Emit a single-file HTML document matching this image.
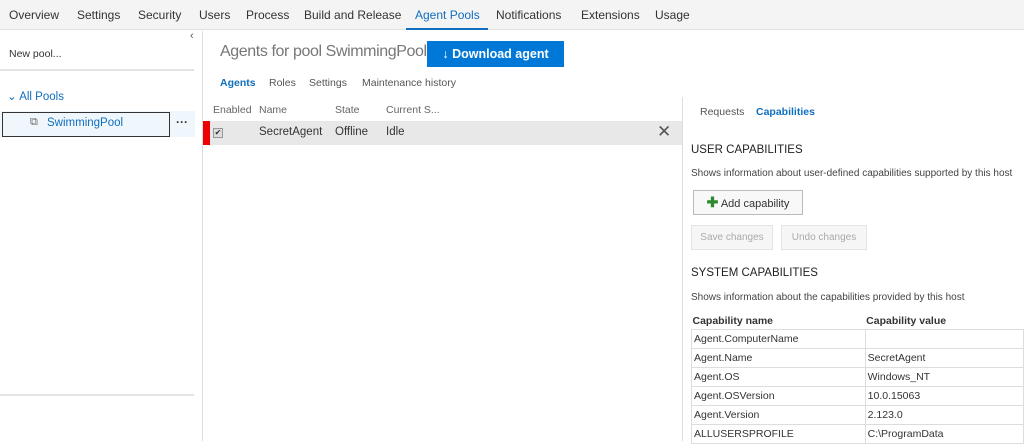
<!DOCTYPE html>
<html><head><meta charset="utf-8"><style>
*{margin:0;padding:0;box-sizing:border-box}
body{width:1024px;height:441px;overflow:hidden;background:#fff;font-family:"Liberation Sans",sans-serif;color:#333;position:relative;font-size:12px}
.a{position:absolute;white-space:nowrap}
.top{left:0;top:0;width:1024px;height:30px;background:#f4f4f4;border-bottom:1px solid #e0e0e0}
.nav{top:8px;font-size:12px;color:#333}
.btn{position:absolute;border:1px solid #ccc;background:#f8f8f8;font-size:11px;text-align:center}
table{border-collapse:collapse;position:absolute;left:691px;top:314px;font-size:10.5px}
td{border:1px solid #ddd;height:19px;padding:0 2px;color:#333}
th{text-align:left;font-weight:bold;padding:0 1px;height:15px;border-bottom:1px solid #ddd}
</style></head><body>
<div class="a top"></div>
<div class="a nav" style="left:9px">Overview</div>
<div class="a nav" style="left:77px">Settings</div>
<div class="a nav" style="left:138px">Security</div>
<div class="a nav" style="left:199px">Users</div>
<div class="a nav" style="left:246px">Process</div>
<div class="a nav" style="left:304px">Build and Release</div>
<div class="a nav" style="left:415px;color:#106ebe">Agent Pools</div>
<div class="a" style="left:406px;top:28px;width:82px;height:2px;background:#106ebe"></div>
<div class="a nav" style="left:496px">Notifications</div>
<div class="a nav" style="left:581px">Extensions</div>
<div class="a nav" style="left:655px">Usage</div>

<div class="a" style="left:202px;top:31px;width:1px;height:410px;background:#ddd"></div>
<div class="a" style="left:190px;top:30px;font-size:11px;color:#555">‹</div>
<div class="a" style="left:9px;top:48px;font-size:10.5px">New pool...</div>
<div class="a" style="left:0;top:69px;width:194px;height:2px;background:#e4e4e4"></div>
<div class="a" style="left:7px;top:89px;font-size:11.5px;color:#106ebe">⌄ All Pools</div>
<div class="a" style="left:0;top:111px;width:195px;height:26px;background:#eff6fc"></div>
<div class="a" style="left:2px;top:112px;width:168px;height:25px;border:1px solid #333;background:#eff6fc"></div>
<div class="a" style="left:30px;top:116px;font-size:11px;color:#666">⧉</div>
<div class="a" style="left:47px;top:117px;font-size:11.5px;color:#106ebe">SwimmingPool</div>
<div class="a" style="left:176px;top:115px;font-size:12px;font-weight:bold">···</div>
<div class="a" style="left:0;top:394px;width:194px;height:2px;background:#e4e4e4"></div>

<div class="a" style="left:220px;top:43px;font-size:16px;letter-spacing:-0.4px;color:#777">Agents for pool SwimmingPool</div>
<div class="a" style="left:427px;top:41px;width:137px;height:26px;background:#0078d7;color:#fff;font-size:12.5px;font-weight:bold;text-align:center;line-height:26px">↓ Download agent</div>
<div class="a" style="left:220px;top:77px;font-size:10.5px;color:#106ebe;font-weight:bold">Agents</div>
<div class="a" style="left:269px;top:77px;font-size:10.5px;color:#555">Roles</div>
<div class="a" style="left:309px;top:77px;font-size:10.5px;color:#555">Settings</div>
<div class="a" style="left:362px;top:77px;font-size:10.5px;color:#555">Maintenance history</div>
<div class="a" style="left:213px;top:104px;font-size:10.5px;color:#666">Enabled</div>
<div class="a" style="left:259px;top:104px;font-size:10.5px;color:#666">Name</div>
<div class="a" style="left:335px;top:104px;font-size:10.5px;color:#666">State</div>
<div class="a" style="left:386px;top:104px;font-size:10.5px;color:#666">Current S...</div>
<div class="a" style="left:203px;top:121px;width:480px;height:24px;background:#e8e8e8"></div>
<div class="a" style="left:203px;top:121px;width:7px;height:24px;background:#e00"></div>
<div class="a" style="left:213px;top:128px;width:10px;height:10px;border:1px solid #999;background:#ddd;font-size:8px;line-height:8px;text-align:center">✔</div>
<div class="a" style="left:259px;top:126px;font-size:11.5px">SecretAgent</div>
<div class="a" style="left:335px;top:126px;font-size:11.5px">Offline</div>
<div class="a" style="left:386px;top:126px;font-size:11.5px">Idle</div>
<div class="a" style="left:657px;top:122px;font-size:17px;color:#555">✕</div>
<div class="a" style="left:682px;top:97px;width:1px;height:344px;background:#ddd"></div>

<div class="a" style="left:700px;top:106px;font-size:10.5px;color:#555">Requests</div>
<div class="a" style="left:756px;top:106px;font-size:10.5px;color:#106ebe;font-weight:bold">Capabilities</div>
<div class="a" style="left:691px;top:144px;font-size:11.5px;color:#222">USER CAPABILITIES</div>
<div class="a" style="left:691px;top:168px;font-size:10px;color:#444">Shows information about user-defined capabilities supported by this host</div>
<div class="btn" style="left:693px;top:190px;width:110px;height:25px;line-height:23px;border-color:#bbb;color:#333"><span style="color:#2b8a2b;font-weight:bold;font-size:14px">✚</span> Add capability</div>
<div class="btn" style="left:691px;top:225px;width:82px;height:25px;line-height:23px;color:#aaa;border-color:#e4e4e4;background:#f6f6f6;font-size:10px">Save changes</div>
<div class="btn" style="left:781px;top:225px;width:86px;height:25px;line-height:23px;color:#aaa;border-color:#e4e4e4;background:#f6f6f6;font-size:10px">Undo changes</div>
<div class="a" style="left:691px;top:267px;font-size:11.5px;color:#222">SYSTEM CAPABILITIES</div>
<div class="a" style="left:691px;top:292px;font-size:10px;color:#444">Shows information about the capabilities provided by this host</div>
<table>
<tr><th style="width:175px">Capability name</th><th style="width:160px">Capability value</th></tr>
<tr><td>Agent.ComputerName</td><td></td></tr>
<tr><td>Agent.Name</td><td>SecretAgent</td></tr>
<tr><td>Agent.OS</td><td>Windows_NT</td></tr>
<tr><td>Agent.OSVersion</td><td>10.0.15063</td></tr>
<tr><td>Agent.Version</td><td>2.123.0</td></tr>
<tr><td>ALLUSERSPROFILE</td><td>C:\ProgramData</td></tr>
</table>
</body></html>
